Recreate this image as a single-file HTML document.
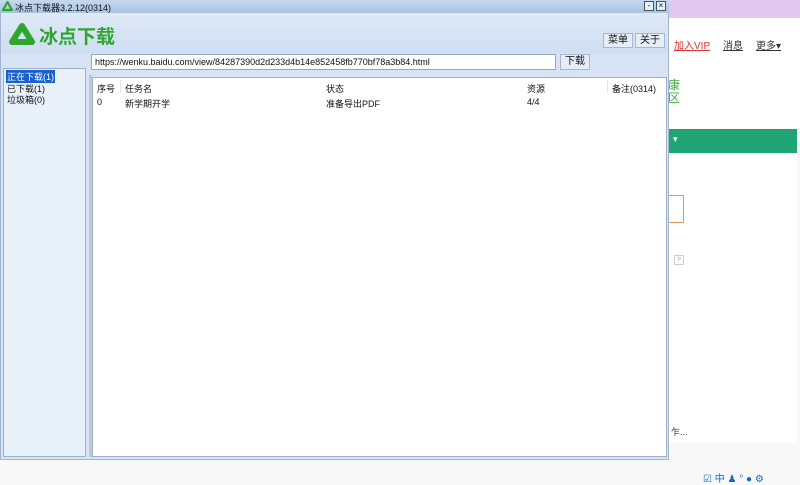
<!DOCTYPE html>
<html><head><meta charset="utf-8"><style>
*{margin:0;padding:0;box-sizing:border-box}
body{width:800px;height:485px;overflow:hidden;background:#f8f8f8;font-family:"Liberation Sans","Noto Sans CJK SC",sans-serif;font-size:9px;color:#111;position:relative}
.a{position:absolute}
</style></head><body>
<div class="a" style="left:669px;top:0;width:131px;height:18px;background:#e3c8f0"></div>
<div class="a" style="left:669px;top:18px;width:131px;height:38px;background:#fff"></div>
<div class="a" style="left:674px;top:37px;font-size:10px;color:#d33;text-decoration:underline">加入VIP</div>
<div class="a" style="left:723px;top:37px;font-size:10px;color:#333;text-decoration:underline">消息</div>
<div class="a" style="left:756px;top:37px;font-size:10px;color:#333;text-decoration:underline">更多▾</div>
<div class="a" style="left:669px;top:56px;width:131px;height:72px;background:#fff"></div>
<div class="a" style="left:668px;top:79px;font-size:12px;color:#4a4;line-height:13px">康<br>区</div>
<div class="a" style="left:669px;top:129px;width:128px;height:24px;background:#1fa574;color:#fff;font-size:9px;padding:5px 4px">▾</div>
<div class="a" style="left:669px;top:153px;width:128px;height:290px;background:#fff"></div>
<div class="a" style="left:669px;top:195px;width:15px;height:28px;border:1px solid #e49a5c;border-left:none"></div>
<div class="a" style="left:674px;top:255px;width:10px;height:10px;border:1px solid #ccc;font-size:7px;color:#999;text-align:center;line-height:8px">&gt;</div>
<div class="a" style="left:671px;top:425px;font-size:9px;color:#333">乍...</div>
<div class="a" style="left:703px;top:475px;width:97px;height:10px;color:#16c;font-size:10px;line-height:10px">☑ 中 ♟ ° ● ⚙</div>
<div class="a" style="left:0;top:0;width:669px;height:460px;background:#d6e4f5;border:1px solid #9fb5d3"></div>
<div class="a" style="left:0;top:0;width:669px;height:13px;background:linear-gradient(#c6d8ee,#a9c3e3)"></div>
<svg class="a" style="left:2px;top:1px" width="11" height="11" viewBox="0 0 11 11"><path d="M5.5 1 L10 9 L1 9Z" fill="none" stroke="#2aa82a" stroke-width="2.2" stroke-linejoin="round"/></svg>
<div class="a" style="left:15px;top:1px;font-size:9px;color:#111">冰点下载器3.2.12(0314)</div>
<div class="a" style="left:644px;top:1px;width:10px;height:10px;background:#e8eef8;border:1px solid #456;font-size:8px;line-height:7px;text-align:center">-</div>
<div class="a" style="left:656px;top:1px;width:10px;height:10px;background:#e8eef8;border:1px solid #456;font-size:8px;line-height:8px;text-align:center">×</div>
<div class="a" style="left:1px;top:13px;width:667px;height:40px;background:linear-gradient(#dfe9f7,#cfdef2)"></div>
<svg class="a" style="left:8px;top:22px" width="28" height="26" viewBox="0 0 28 26"><path d="M14 4 L24 20 L4 20Z" fill="none" stroke="#2fa62f" stroke-width="6" stroke-linejoin="round"/></svg>
<div class="a" style="left:39px;top:22px;font-size:19px;font-weight:bold;color:#2fa62f">冰点下载</div>
<div class="a" style="left:603px;top:33px;width:30px;height:15px;background:#e6edf7;border:1px solid #a4b8d2;font-size:10px;text-align:center;line-height:13px">菜单</div>
<div class="a" style="left:635px;top:33px;width:30px;height:15px;background:#e6edf7;border:1px solid #a4b8d2;font-size:10px;text-align:center;line-height:13px">关于</div>
<div class="a" style="left:91px;top:54px;width:465px;height:16px;background:#fff;border:1px solid #8fa6c4;font-size:9px;line-height:14px;padding-left:3px">https://wenku.baidu.com/view/84287390d2d233d4b14e852458fb770bf78a3b84.html</div>
<div class="a" style="left:560px;top:54px;width:30px;height:16px;background:#e6edf7;border:1px solid #a4b8d2;font-size:10px;text-align:center;line-height:14px">下载</div>
<div class="a" style="left:3px;top:68px;width:83px;height:389px;background:#e8f0fa;border:1px solid #9fb0c8"></div>
<div class="a" style="left:6px;top:70px;background:#1660d0;color:#fff;font-size:9px;padding:0 1px">正在下载(1)</div>
<div class="a" style="left:7px;top:82px;font-size:9px">已下载(1)</div>
<div class="a" style="left:7px;top:93px;font-size:9px">垃圾箱(0)</div>
<div class="a" style="left:89px;top:75px;width:3px;height:382px;background:#b8c8de"></div>
<div class="a" style="left:92px;top:77px;width:575px;height:380px;background:#fff;border:1px solid #9fb0c8"></div>
<div class="a" style="left:97px;top:82px">序号</div>
<div class="a" style="left:125px;top:82px">任务名</div>
<div class="a" style="left:326px;top:82px">状态</div>
<div class="a" style="left:527px;top:82px">资源</div>
<div class="a" style="left:612px;top:82px">备注(0314)</div>
<div class="a" style="left:120px;top:80px;width:1px;height:13px;background:#e4e4e4"></div>
<div class="a" style="left:607px;top:80px;width:1px;height:13px;background:#e4e4e4"></div>
<div class="a" style="left:97px;top:97px">0</div>
<div class="a" style="left:125px;top:97px">新学期开学</div>
<div class="a" style="left:326px;top:97px">准备导出PDF</div>
<div class="a" style="left:527px;top:97px">4/4</div>
</body></html>
